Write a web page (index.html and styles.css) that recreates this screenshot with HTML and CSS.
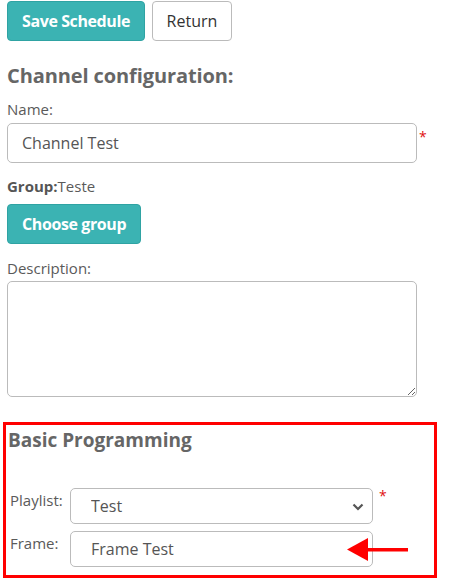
FILE: index.html
```html
<!DOCTYPE html>
<html lang="en">
<head>
    <meta charset="UTF-8">
    <meta name="viewport" content="width=device-width, initial-scale=1.0">
    <title>Channel configuration</title>
    <link rel="stylesheet" href="styles.css">
</head>
<body>
    <div class="page">
        <div class="actions">
            <button class="btn btn-primary">Save Schedule</button>
            <button class="btn btn-default">Return</button>
        </div>

        <h2 class="section-title">Channel configuration:</h2>

        <label class="field-label">Name:</label>
        <div class="field-row">
            <input class="form-control" type="text" value="Channel Test">
            <span class="required">*</span>
        </div>

        <p class="group-line"><strong>Group:</strong>Teste</p>
        <button class="btn btn-primary">Choose group</button>

        <label class="field-label desc-label">Description:</label>
        <div class="field-row">
            <textarea class="form-control textarea"></textarea>
        </div>

        <section class="highlight-box">
            <h3 class="box-title">Basic Programming</h3>

            <div class="inline-row playlist-row">
                <label class="inline-label">Playlist:</label>
                <div class="select-wrap">
                    <select class="form-control select">
                        <option>Test</option>
                    </select>
                    <svg class="chevron" width="12" height="8" viewBox="0 0 12 8">
                        <path d="M1.5 1.5 L6 6 L10.5 1.5" fill="none" stroke="#555" stroke-width="2.2"/>
                    </svg>
                </div>
                <span class="required small">*</span>
            </div>

            <div class="inline-row">
                <label class="inline-label">Frame:</label>
                <input class="form-control inline-input" type="text" value="Frame Test">
            </div>

            <svg class="arrow" width="62" height="24" viewBox="0 0 62 24">
                <polygon points="0,11.5 21,0 21,23" fill="#ff0000"/>
                <rect x="18" y="10" width="43" height="3.5" fill="#ff0000"/>
            </svg>
        </section>
    </div>
</body>
</html>
```

FILE: styles.css
```css
* {
    margin: 0;
    padding: 0;
    box-sizing: border-box;
    font-family: 'Open Sans', 'DejaVu Sans', sans-serif;
}

body {
    background-color: #ffffff;
    color: #5a5a5a;
}

.page {
    padding: 1px 7px 0 7px;
    width: 457px;
    height: 578px;
    overflow: hidden;
}

.actions {
    display: flex;
    gap: 7px;
}

.btn {
    height: 40px;
    padding: 0 14px;
    border-radius: 4px;
    font-size: 16px;
    cursor: pointer;
}

.btn-primary {
    background-color: #3bb3b3;
    border: 1px solid #2fa3a3;
    color: #fff;
    font-weight: 700;
    letter-spacing: -0.4px;
}

.btn-default {
    background-color: #fff;
    border: 1px solid #bbb;
    color: #333;
    width: 80px;
    padding: 0;
}

.section-title {
    margin-top: 21px;
    font-size: 20px;
    font-weight: 700;
    color: #666;
    letter-spacing: -0.1px;
    line-height: 28px;
}

.field-label {
    display: block;
    margin-top: 8px;
    font-size: 15px;
    line-height: 22px;
    color: #5a5a5a;
}

.field-row {
    display: flex;
    align-items: flex-start;
    margin-top: 3px;
}

.form-control {
    width: 410px;
    height: 40px;
    border: 1px solid #bbb;
    border-radius: 5px;
    padding: 0 14px;
    font-size: 16px;
    color: #555;
    background-color: #fff;
}

.required {
    color: #e01010;
    font-size: 14px;
    margin-left: 2px;
    line-height: 28px;
}

.group-line {
    margin-top: 12px;
    margin-bottom: 7px;
    font-size: 15px;
    line-height: 22px;
}

.group-line strong {
    color: #555;
}

.desc-label {
    margin-top: 13px;
}

.desc-label + .field-row {
    margin-top: 2px;
}

.textarea {
    height: 116px;
    resize: vertical;
}

.highlight-box {
    position: relative;
    margin: 25px 0 0 -4px;
    width: 434px;
    height: 156px;
    border: 3px solid #ff0000;
    padding: 1px 0 0 2px;
}

.box-title {
    font-size: 19px;
    font-weight: 700;
    color: #666;
    line-height: 28px;
    letter-spacing: 0;
}

.playlist-row {
    margin-top: 34px;
}

.inline-row {
    display: flex;
    align-items: flex-start;
    margin-bottom: 7px;
}

.inline-label {
    width: 62px;
    padding-left: 2px;
    font-size: 15px;
    color: #5a5a5a;
    line-height: 24px;
}

.select-wrap {
    position: relative;
}

.select {
    width: 303px;
    height: 36px;
    appearance: none;
    padding-left: 20px;
}

.chevron {
    position: absolute;
    right: 9px;
    top: 15px;
}

.inline-input {
    width: 303px;
    height: 36px;
    padding-left: 20px;
}

.required.small {
    margin-left: 6px;
    line-height: 16px;
}

.arrow {
    position: absolute;
    left: 341px;
    top: 113px;
}
```
